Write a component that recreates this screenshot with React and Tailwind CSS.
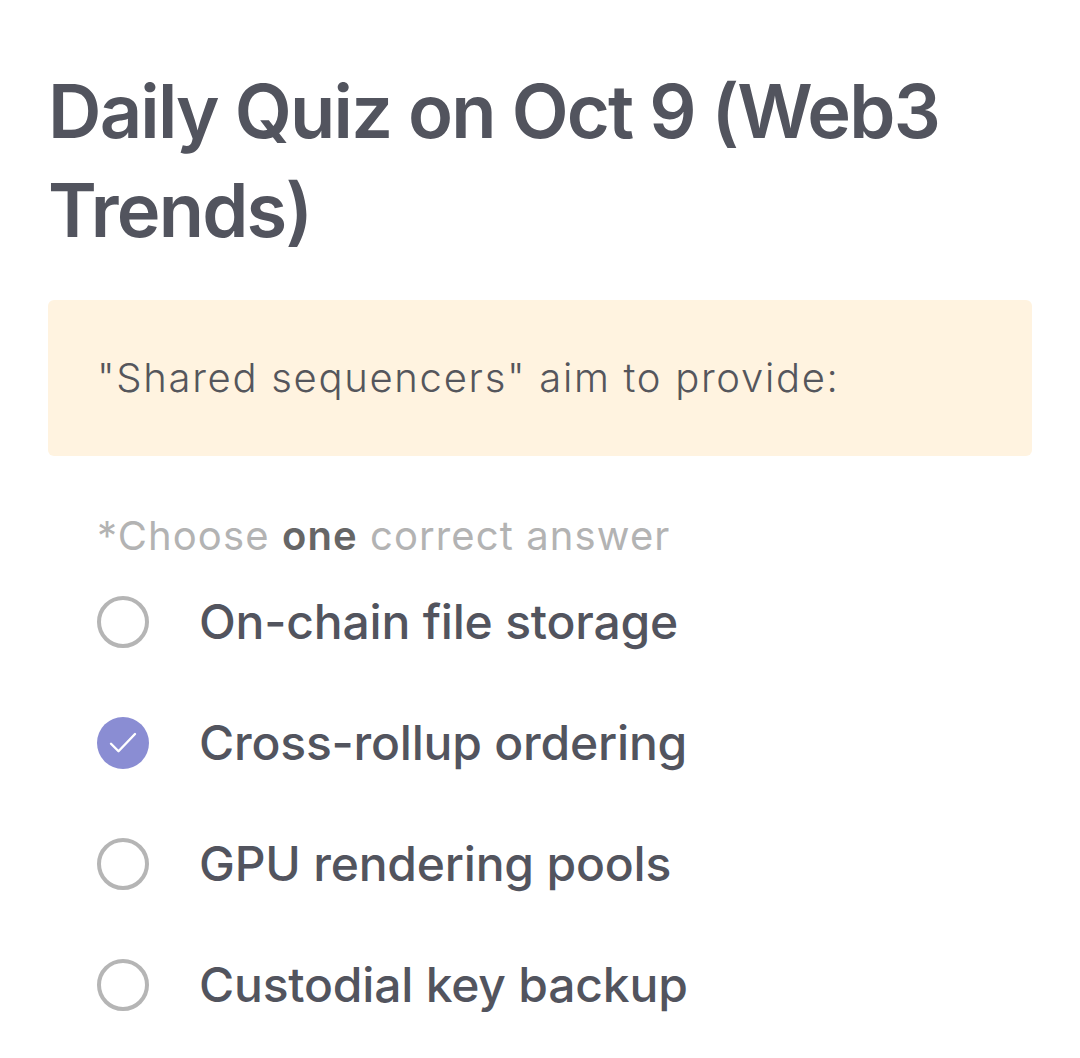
const options = [
  { label: "On-chain file storage", checked: false },
  { label: "Cross-rollup ordering", checked: true },
  { label: "GPU rendering pools", checked: false },
  { label: "Custodial key backup", checked: false },
];

function Radio({ checked }) {
  if (checked) {
    return (
      <div className="w-[52px] h-[52px] rounded-full bg-[#8a8dd3] flex items-center justify-center shrink-0">
        <svg width="36" height="36" viewBox="0 0 24 24" fill="none" stroke="white" strokeWidth="1.6" strokeLinecap="round" strokeLinejoin="round">
          <path d="M4 12.5l5 5L20 6" />
        </svg>
      </div>
    );
  }
  return <div className="w-[52px] h-[52px] rounded-full border-[4px] border-[#b5b5b5] shrink-0" />;
}

export default function App() {
  return (
    <div className="min-h-screen bg-white font-['Inter',sans-serif] px-12 pt-[62px]">
      <h1 className="text-[74px] leading-[99px] font-semibold text-[#52545e] tracking-[-1.8px]">
        Daily Quiz on Oct 9 (Web3 Trends)
      </h1>

      <div className="mt-[40px] h-[156px] rounded-md bg-[#fff3e0] flex items-center px-[49px]">
        <p className="text-[40px] font-light text-[#55565c] tracking-[1.7px]">"Shared sequencers" aim to provide:</p>
      </div>

      <div className="px-[49px] mt-[55px]">
        <p className="text-[40px] text-[#b3b3b3] leading-[50px] tracking-[1.1px]">
          *Choose <span className="font-semibold text-[#666]">one</span> correct answer
        </p>
        <div className="flex flex-col">
          {options.map((o) => (
            <div key={o.label} className="h-[121px] flex items-center gap-[50px]">
              <Radio checked={o.checked} />
              <span className="text-[48px] font-medium text-[#52545e] tracking-[-0.2px]">{o.label}</span>
            </div>
          ))}
        </div>
      </div>
    </div>
  );
}
